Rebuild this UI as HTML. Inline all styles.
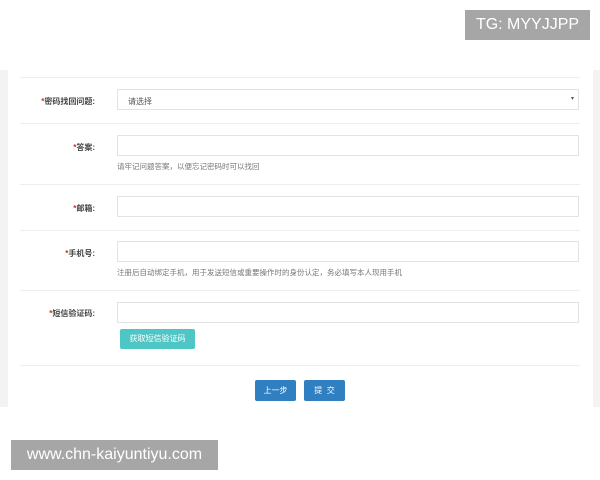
<!DOCTYPE html><html><head><meta charset="utf-8"><style>
body{margin:0;width:600px;height:480px;background:#fff;position:relative;overflow:hidden;font-family:"Liberation Sans","Noto Sans CJK SC",sans-serif}
.a{position:absolute}
.bg{left:0;top:70px;width:600px;height:337px;background:#f3f3f3}
.pn{left:8px;top:70px;width:585px;height:337px;background:#fff}
.ln{left:20px;width:560px;height:1px;background:#eee}
.lb{font-size:8px;color:#444;text-align:right;width:95px;left:0;font-weight:bold}
.lb b{color:#c0392b}
.in{left:117px;width:462px;height:21px;border:1px solid #e3e3e3;box-sizing:border-box;background:#fff}
.h{left:117px;font-size:7.5px;color:#777}
.bt{color:#fff;font-size:8px;text-align:center;border-radius:2px}
</style></head><body>
<div class="a bg"></div><div class="a pn"></div>
<div class="a ln" style="top:77px"></div>
<div class="a lb" style="top:96px"><b>*</b>密码找回问题:</div>
<div class="a in" style="top:89px;font-size:8px;color:#555;padding:6px 10px">请选择<span style="position:absolute;right:4px;top:5px;font-size:6px">▾</span></div>
<div class="a ln" style="top:123px"></div>
<div class="a lb" style="top:142px"><b>*</b>答案:</div>
<div class="a in" style="top:135px"></div>
<div class="a h" style="top:161px">请牢记问题答案，以便忘记密码时可以找回</div>
<div class="a ln" style="top:184px"></div>
<div class="a lb" style="top:203px"><b>*</b>邮箱:</div>
<div class="a in" style="top:196px"></div>
<div class="a ln" style="top:230px"></div>
<div class="a lb" style="top:248px"><b>*</b>手机号:</div>
<div class="a in" style="top:241px"></div>
<div class="a h" style="top:267px">注册后自动绑定手机，用于发送短信或重要操作时的身份认定，务必填写本人现用手机</div>
<div class="a ln" style="top:290px"></div>
<div class="a lb" style="top:308px"><b>*</b>短信验证码:</div>
<div class="a in" style="top:302px"></div>
<div class="a bt" style="left:120px;top:329px;width:75px;height:20px;line-height:20px;background:#4fc6c6">获取短信验证码</div>
<div class="a ln" style="top:365px"></div>
<div class="a bt" style="left:255px;top:380px;width:41px;height:21px;line-height:21px;background:#2f7fc1">上一步</div>
<div class="a bt" style="left:304px;top:380px;width:41px;height:21px;line-height:21px;background:#2f7fc1">提&nbsp;&nbsp;交</div>
<div class="a" style="left:465px;top:10px;width:125px;height:30px;background:#a6a6a6;color:#fff;font-size:16px;line-height:30px;text-align:center">TG: MYYJJPP</div>
<div class="a" style="left:11px;top:440px;width:207px;height:30px;background:#a6a6a6;color:#fff;font-size:16px;line-height:30px;text-align:center">www.chn-kaiyuntiyu.com</div>
</body></html>
